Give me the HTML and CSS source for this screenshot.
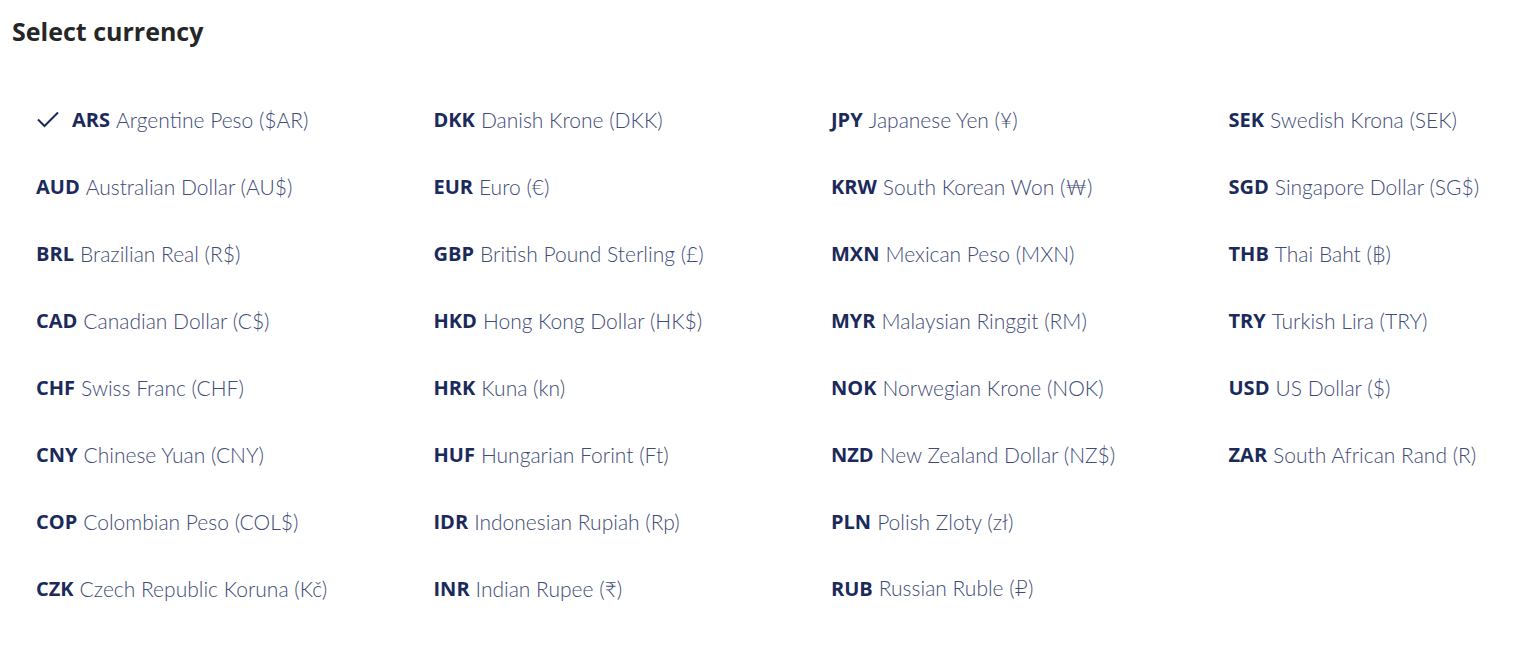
FILE: index.html
```html
<!DOCTYPE html>
<html lang="en">
<head>
    <meta charset="UTF-8">
    <meta name="viewport" content="width=device-width, initial-scale=1.0">
    <title>Select currency</title>
    <link rel="stylesheet" href="styles.css">
</head>
<body>
    <div class="picker">
        <h2 class="title">Select currency</h2>
        <ul class="currencies">
            <li class="item selected">
                <svg class="check" viewBox="0 0 24 24" width="24" height="24"><path d="M2 12.5l6.5 6.5L22 5.5" fill="none" stroke="currentColor" stroke-width="2"/></svg>
                <b>ARS</b> Argentine Peso ($AR)
            </li>
            <li class="item"><b>DKK</b> Danish Krone (DKK)</li>
            <li class="item"><b>JPY</b> Japanese Yen (¥)</li>
            <li class="item"><b>SEK</b> Swedish Krona (SEK)</li>

            <li class="item"><b>AUD</b> Australian Dollar (AU$)</li>
            <li class="item"><b>EUR</b> Euro (€)</li>
            <li class="item"><b>KRW</b> South Korean Won (₩)</li>
            <li class="item"><b>SGD</b> Singapore Dollar (SG$)</li>

            <li class="item"><b>BRL</b> Brazilian Real (R$)</li>
            <li class="item"><b>GBP</b> British Pound Sterling (£)</li>
            <li class="item"><b>MXN</b> Mexican Peso (MXN)</li>
            <li class="item"><b>THB</b> Thai Baht (฿)</li>

            <li class="item"><b>CAD</b> Canadian Dollar (C$)</li>
            <li class="item"><b>HKD</b> Hong Kong Dollar (HK$)</li>
            <li class="item"><b>MYR</b> Malaysian Ringgit (RM)</li>
            <li class="item"><b>TRY</b> Turkish Lira (TRY)</li>

            <li class="item"><b>CHF</b> Swiss Franc (CHF)</li>
            <li class="item"><b>HRK</b> Kuna (kn)</li>
            <li class="item"><b>NOK</b> Norwegian Krone (NOK)</li>
            <li class="item"><b>USD</b> US Dollar ($)</li>

            <li class="item"><b>CNY</b> Chinese Yuan (CNY)</li>
            <li class="item"><b>HUF</b> Hungarian Forint (Ft)</li>
            <li class="item"><b>NZD</b> New Zealand Dollar (NZ$)</li>
            <li class="item"><b>ZAR</b> South African Rand (R)</li>

            <li class="item"><b>COP</b> Colombian Peso (COL$)</li>
            <li class="item"><b>IDR</b> Indonesian Rupiah (Rp)</li>
            <li class="item"><b>PLN</b> Polish Zloty (zł)</li>
            <li class="item empty"></li>

            <li class="item"><b>CZK</b> Czech Republic Koruna (Kč)</li>
            <li class="item"><b>INR</b> Indian Rupee (₹)</li>
            <li class="item"><b>RUB</b> Russian Ruble (₽)</li>
        </ul>
    </div>
</body>
</html>
```

FILE: styles.css
```css
body{
    margin: 0;
    background: #fff;
    font-family: Lato, "Open Sans", "DejaVu Sans", sans-serif;
    overflow: hidden;
}
.picker{
    padding: 14px 12px;
}
.title{
    margin: 0;
    font-family: "Open Sans", sans-serif;
    font-size: 25px;
    font-weight: 700;
    line-height: 34px;
    color: #262626;
}
.currencies{
    list-style: none;
    margin: 53px 0 0;
    padding: 0;
    display: grid;
    grid-template-columns: repeat(4, 397.5px);
    grid-auto-rows: 67px;
}
.item{
    padding-left: 24px;
    height: 36px;
    display: flex;
    align-items: center;
    gap: 6px;
    font-size: 21px;
    font-weight: 300;
    color: #414b77;
    white-space: nowrap;
}
.item b{
    font-family: "Open Sans", sans-serif;
    font-weight: 700;
    font-size: 20px;
    color: #1b2a5b;
}
.check{
    color: #1b2a5b;
    margin-right: 6px;
}
```
